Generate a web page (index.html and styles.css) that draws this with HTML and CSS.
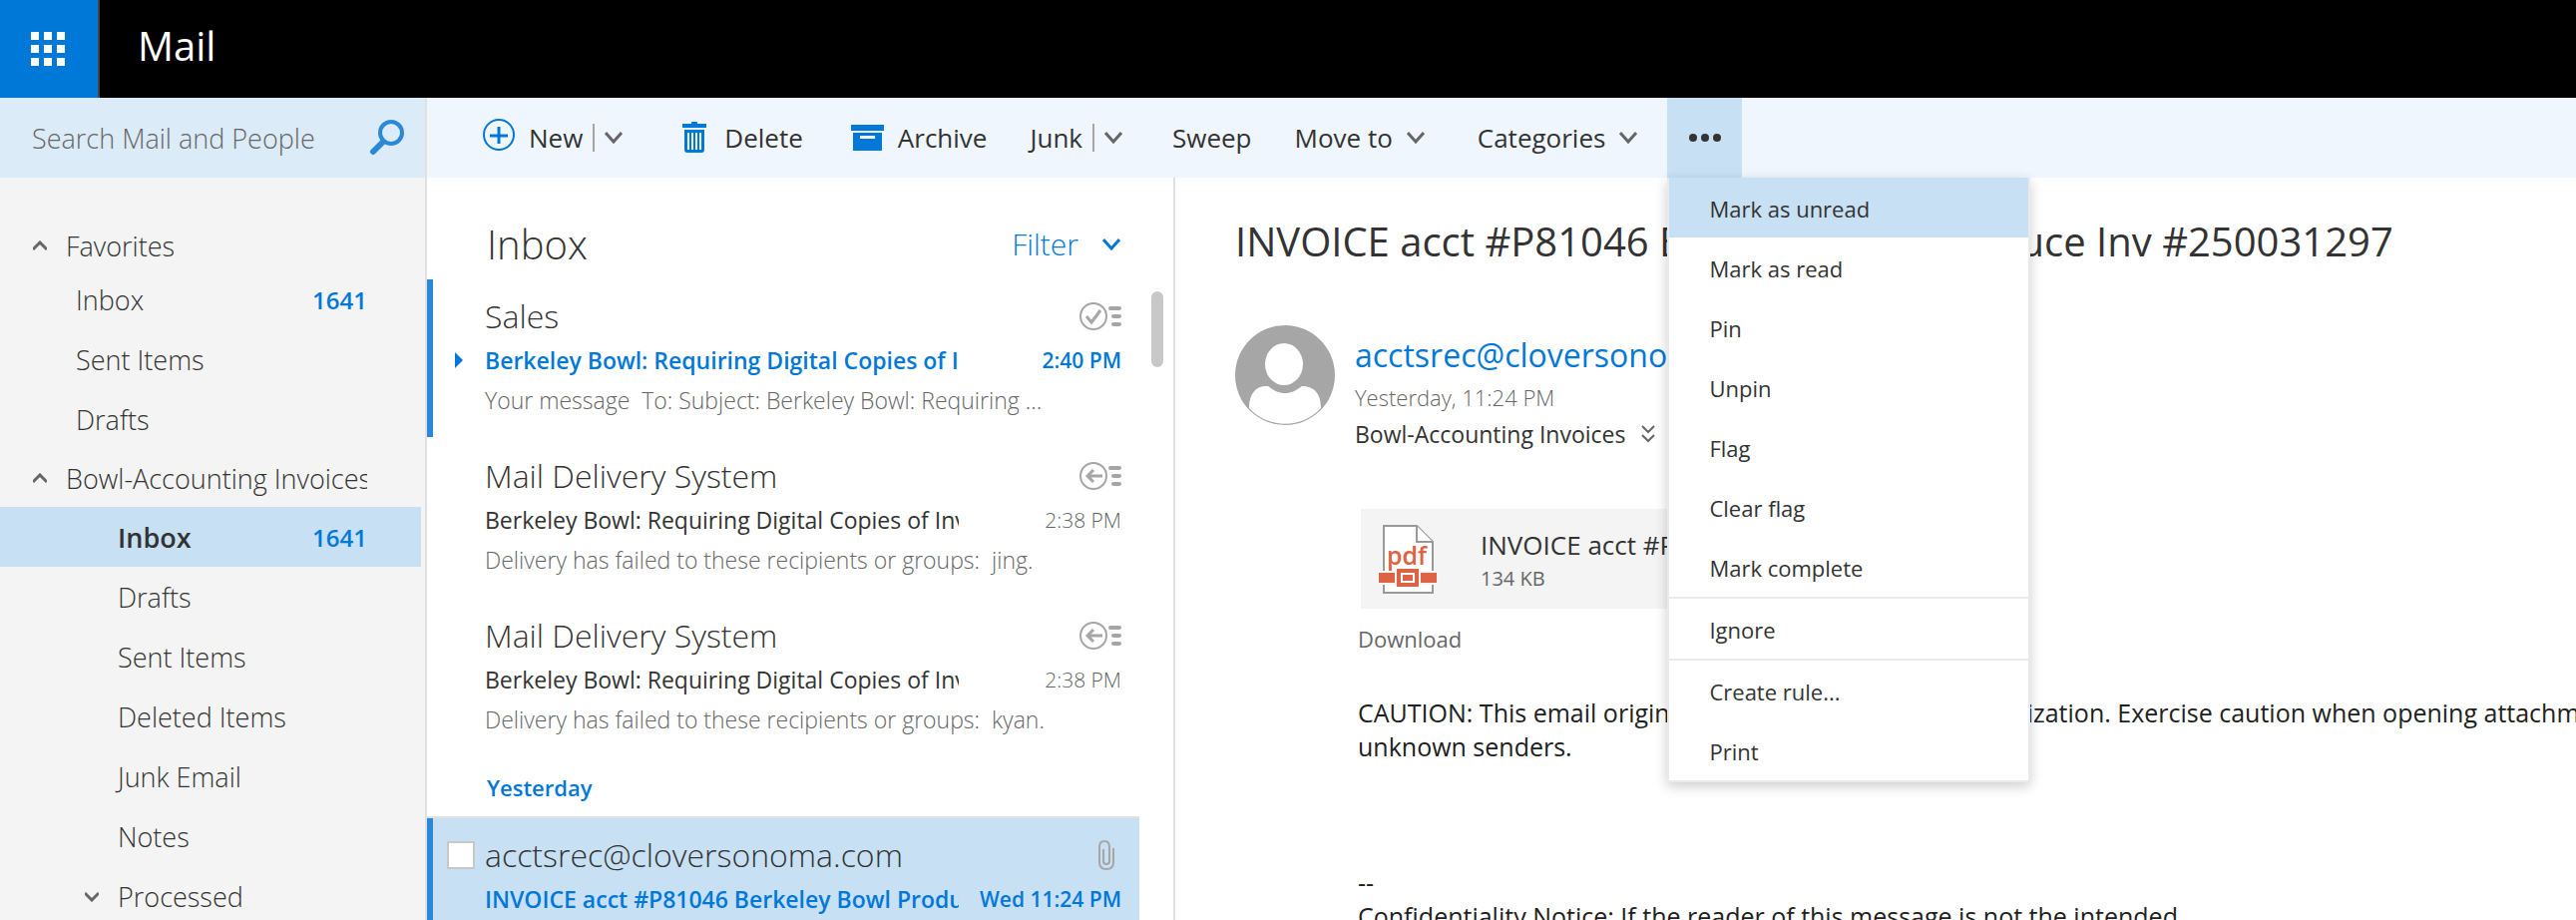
FILE: index.html
```html
<!DOCTYPE html>
<html lang="en">
<head>
    <meta charset="UTF-8">
    <meta name="viewport" content="width=device-width, initial-scale=1.0">
    <title>Mail</title>
    <link rel="stylesheet" href="styles.css">
</head>
<body>
    <header class="topbar">
        <button class="launcher" aria-label="App launcher">
            <svg width="34" height="34" viewBox="0 0 34 34" fill="#fff">
                <path d="M0 0h8v8H0zM13 0h8v8h-8zM26 0h8v8h-8zM0 13h8v8H0zM13 13h8v8h-8zM26 13h8v8h-8zM0 26h8v8H0zM13 26h8v8h-8zM26 26h8v8h-8z"/>
            </svg>
        </button>
        <span class="app-name">Mail</span>
    </header>

    <div class="main">
        <aside class="sidebar">
            <form class="search">
                <input type="text" placeholder="Search Mail and People" aria-label="Search Mail and People">
                <button type="button" aria-label="Search">
                    <svg width="36" height="36" viewBox="0 0 36 36" fill="none" stroke="#2b88d8" stroke-linecap="round">
                        <circle cx="22" cy="13" r="11" stroke-width="4"/>
                        <path d="M14 22L4 32" stroke-width="6"/>
                    </svg>
                </button>
            </form>
            <nav class="folders">
                <button class="group-title">
                    <svg class="caret" viewBox="0 0 14 11"><path d="M0 9L7 2L14 9"/></svg>
                    <span>Favorites</span>
                </button>
                <a class="folder" href="#">Inbox<span class="count">1641</span></a>
                <a class="folder" href="#">Sent Items</a>
                <a class="folder" href="#">Drafts</a>
                <button class="group-title account">
                    <svg class="caret" viewBox="0 0 14 11"><path d="M0 9L7 2L14 9"/></svg>
                    <span>Bowl-Accounting Invoices</span>
                </button>
                <a class="folder sub selected" href="#">Inbox<span class="count">1641</span></a>
                <a class="folder sub" href="#">Drafts</a>
                <a class="folder sub" href="#">Sent Items</a>
                <a class="folder sub" href="#">Deleted Items</a>
                <a class="folder sub" href="#">Junk Email</a>
                <a class="folder sub" href="#">Notes</a>
                <a class="folder nested" href="#">
                    <svg class="caret" viewBox="0 0 14 11"><path d="M0 2L7 9L14 2"/></svg>
                    Processed
                </a>
            </nav>
        </aside>

        <div class="content">
            <div class="toolbar">
                <div class="tool split new">
                    <button>
                        <svg class="plus" width="32" height="32" viewBox="0 0 32 32" fill="none" stroke="#0078d7">
                            <circle cx="16" cy="16" r="15" stroke-width="2"/>
                            <path d="M16 8v17M7 17h18" stroke-width="3"/>
                        </svg>
                        New
                    </button>
                    <button class="drop" aria-label="More new options">
                        <svg class="chevron" viewBox="0 0 18 14"><path d="M1 2L9 11L17 2"/></svg>
                    </button>
                </div>
                <button class="tool delete">
                    <svg width="24" height="32" viewBox="0 0 24 32">
                        <path fill="#0078d7" d="M9 2V1q0-1 1-1h4q1 0 1 1v1h9v4H0V2zM2 8h20v20q0 3-3 3H5q-3 0-3-3z"/>
                        <path stroke="#eff6fd" stroke-width="2" d="M6 11v17M10 11v17M14 11v17M18 11v17"/>
                    </svg>
                    Delete
                </button>
                <button class="tool archive">
                    <svg width="33" height="26" viewBox="0 0 33 26">
                        <path fill="#0078d7" d="M0 0h33v6H0zM2 8h29v18H2z"/>
                        <path fill="#fff" d="M9 11h15v3H9z"/>
                    </svg>
                    Archive
                </button>
                <div class="tool split junk">
                    <button>Junk</button>
                    <button class="drop" aria-label="Junk options">
                        <svg class="chevron" viewBox="0 0 18 14"><path d="M1 2L9 11L17 2"/></svg>
                    </button>
                </div>
                <button class="tool sweep">Sweep</button>
                <button class="tool move">
                    Move to
                    <svg class="chevron" viewBox="0 0 18 14"><path d="M1 2L9 11L17 2"/></svg>
                </button>
                <button class="tool categories">
                    Categories
                    <svg class="chevron" viewBox="0 0 18 14"><path d="M1 2L9 11L17 2"/></svg>
                </button>
                <div class="more">
                    <button class="more-btn" aria-label="More commands">
                        <svg width="32" height="8" viewBox="0 0 32 8" fill="#333">
                            <circle cx="4" cy="4" r="4"/><circle cx="16" cy="4" r="4"/><circle cx="28" cy="4" r="4"/>
                        </svg>
                    </button>
                    <div class="menu">
                        <button class="active">Mark as unread</button>
                        <button>Mark as read</button>
                        <button>Pin</button>
                        <button>Unpin</button>
                        <button>Flag</button>
                        <button>Clear flag</button>
                        <button>Mark complete</button>
                        <hr>
                        <button>Ignore</button>
                        <hr>
                        <button>Create rule...</button>
                        <button>Print</button>
                    </div>
                </div>
            </div>

            <div class="panes">
                <section class="list">
                    <div class="list-header">
                        <h1>Inbox</h1>
                        <button class="filter">
                            Filter
                            <svg class="chevron" viewBox="0 0 18 14"><path d="M1 2L9 11L17 2"/></svg>
                        </button>
                    </div>
                    <div class="list-body">
                        <div class="messages">
                            <article class="message unread">
                                <div class="mark">
                                    <svg width="8" height="16" viewBox="0 0 8 16" fill="#0078d7"><path d="M0 0L8 8L0 16z"/></svg>
                                </div>
                                <div class="row">
                                    <span class="name">Sales</span>
                                    <svg class="status" viewBox="0 0 42 28">
                                        <circle cx="14" cy="14" r="13"/>
                                        <path d="M7 14L12 20L21 8" stroke-width="3"/>
                                        <path class="lines" d="M31 6h9M34 14h6M34 22h6"/>
                                    </svg>
                                </div>
                                <div class="row">
                                    <span class="subject">Berkeley Bowl: Requiring Digital Copies of Invoices</span>
                                    <time>2:40 PM</time>
                                </div>
                                <p class="preview">Your message&nbsp; To: Subject: Berkeley Bowl: Requiring ...</p>
                            </article>
                            <article class="message">
                                <div class="row">
                                    <span class="name">Mail Delivery System</span>
                                    <svg class="status" viewBox="0 0 42 28">
                                        <circle cx="14" cy="14" r="13"/>
                                        <path d="M23 14H8M14 8L8 14L14 20" stroke-width="3"/>
                                        <path class="lines" d="M31 6h9M34 14h6M34 22h6"/>
                                    </svg>
                                </div>
                                <div class="row">
                                    <span class="subject">Berkeley Bowl: Requiring Digital Copies of Invoices</span>
                                    <time>2:38 PM</time>
                                </div>
                                <p class="preview">Delivery has failed to these recipients or groups:&nbsp; jing.</p>
                            </article>
                            <article class="message">
                                <div class="row">
                                    <span class="name">Mail Delivery System</span>
                                    <svg class="status" viewBox="0 0 42 28">
                                        <circle cx="14" cy="14" r="13"/>
                                        <path d="M23 14H8M14 8L8 14L14 20" stroke-width="3"/>
                                        <path class="lines" d="M31 6h9M34 14h6M34 22h6"/>
                                    </svg>
                                </div>
                                <div class="row">
                                    <span class="subject">Berkeley Bowl: Requiring Digital Copies of Invoices</span>
                                    <time>2:38 PM</time>
                                </div>
                                <p class="preview">Delivery has failed to these recipients or groups:&nbsp; kyan.</p>
                            </article>
                            <h2 class="day">Yesterday</h2>
                            <article class="message unread current">
                                <input type="checkbox" class="pick" aria-label="Select message">
                                <div class="row">
                                    <span class="name">acctsrec@cloversonoma.com</span>
                                    <svg class="clip" width="16" height="30" viewBox="0 0 16 30" fill="none" stroke="#a6a6a6" stroke-width="2">
                                        <path d="M15 8v14q0 7-7 7t-7-7V7q0-6 5-6t5 6v14q0 3-3 3t-3-3V9"/>
                                    </svg>
                                </div>
                                <div class="row">
                                    <span class="subject">INVOICE acct #P81046 Berkeley Bowl Produce Inv</span>
                                    <time>Wed 11:24 PM</time>
                                </div>
                            </article>
                        </div>
                        <div class="scrollbar"></div>
                    </div>
                </section>

                <section class="reading">
                    <h2 class="title">INVOICE acct #P81046 Berkeley Bowl Produce Inv #250031297</h2>
                    <div class="sender">
                        <svg class="avatar" viewBox="0 0 100 100">
                            <circle cx="50" cy="50" r="50" fill="#a6a6a6"/>
                            <ellipse cx="49" cy="39" rx="19" ry="21" fill="#fff"/>
                            <path fill="#fff" d="M14 83C14 67 22 60 33 61C40 66 44 68 50 68C56 68 60 66 67 61C78 61 86 67 86 83A49 49 0 0 1 14 83z"/>
                        </svg>
                        <div class="sender-info">
                            <a class="from" href="#">acctsrec@cloversonoma.com</a>
                            <p class="date">Yesterday, 11:24 PM</p>
                            <p class="to">
                                Bowl-Accounting Invoices
                                <svg width="14" height="18" viewBox="0 0 14 18" fill="none" stroke="#666" stroke-width="2">
                                    <path d="M1 1L7 7L13 1M1 10L7 16L13 10"/>
                                </svg>
                            </p>
                        </div>
                    </div>
                    <div class="mail-body">
                        <a class="attachment" href="#">
                            <svg width="58" height="70" viewBox="0 0 58 70">
                                <path d="M5 1H38L54 17V68H5z" fill="#fff" stroke="#999" stroke-width="2"/>
                                <path d="M38 1V17H54" fill="#fff" stroke="#999" stroke-width="2"/>
                                <path d="M0 46h58v14H0z" fill="#f4f4f4"/>
                                <text x="28" y="40" text-anchor="middle" class="pdf-text">pdf</text>
                                <path d="M0 48h16v10H0zM42 48h16v10H42zM18 44h22v18H18z" fill="#dc6344"/>
                                <path d="M23 49h12v8H23z" fill="#dc6344" stroke="#fff" stroke-width="2"/>
                            </svg>
                            <span class="file">
                                <span class="file-name">INVOICE acct #P81046.pdf</span>
                                <span class="file-size">134 KB</span>
                            </span>
                        </a>
                        <a class="download" href="#">Download</a>
                        <p class="text">CAUTION: This email originated from outside of the organization. Exercise caution when opening attachments or links from
unknown senders.



--
Confidentiality Notice: If the reader of this message is not the intended</p>
                    </div>
                </section>
            </div>
        </div>
    </div>
</body>
</html>
```
FILE: styles.css
```css
* {
    margin: 0;
    padding: 0;
    box-sizing: border-box;
}
body {
    height: 100vh;
    display: flex;
    flex-direction: column;
    overflow: hidden;
    background: #fff;
    color: #333;
    font-family: "Open Sans", "Noto Sans", sans-serif;
    font-size: 22px;
}
button, input {
    font: inherit;
    color: inherit;
    background: none;
    border: none;
    cursor: pointer;
}
a {
    color: inherit;
    text-decoration: none;
}
svg {
    flex: none;
}

/* Top bar */
.topbar {
    display: flex;
    align-items: center;
    height: 98px;
    flex: none;
    background: #000;
    color: #fff;
}
.launcher {
    display: flex;
    align-items: center;
    justify-content: center;
    width: 100px;
    height: 98px;
    padding-right: 2px;
    background: #0078d7;
    border-right: 2px solid #444;
}
.app-name {
    margin-left: 38px;
    padding-bottom: 8px;
    font-size: 40px;
}
.main {
    display: flex;
    flex: 1;
    min-height: 0;
}

/* Folder pane */
.sidebar {
    flex: none;
    width: 428px;
    background: #f4f4f4;
    border-right: 2px solid #e1e1e1;
    font-size: 27px;
    font-weight: 300;
    overflow: hidden;
}
.search {
    display: flex;
    align-items: center;
    height: 80px;
    padding: 0 20px 0 32px;
    background: #dcebf8;
}
.search input {
    flex: 1;
    min-width: 0;
    font-size: 27px;
    outline: none;
}
.search input::placeholder {
    color: #666;
    opacity: 1;
}
.search button {
    display: flex;
}
.folders {
    padding-top: 44px;
}
.group-title {
    display: flex;
    align-items: center;
    gap: 19px;
    width: 368px;
    height: 48px;
    padding-left: 33px;
    font-weight: 300;
    text-align: left;
    white-space: nowrap;
}
.group-title span {
    overflow: hidden;
}
.account {
    height: 58px;
}
.caret {
    width: 14px;
    height: 11px;
    fill: none;
    stroke: #666;
    stroke-width: 3;
}
.folder {
    display: flex;
    align-items: center;
    height: 60px;
    margin-right: 4px;
    padding: 0 54px 0 76px;
}
.sub {
    padding-left: 118px;
}
.nested {
    padding-left: 85px;
    gap: 19px;
}
.selected {
    background: #c7e0f4;
    font-weight: 600;
}
.count {
    margin-left: auto;
    color: #0078d7;
    font-size: 24px;
    font-weight: 600;
}

/* Toolbar */
.content {
    display: flex;
    flex-direction: column;
    flex: 1;
    min-width: 0;
}
.toolbar {
    display: flex;
    align-items: center;
    flex: none;
    height: 80px;
    padding-left: 56px;
    background: #eff6fd;
    font-size: 26px;
}
.tool, .split button {
    display: flex;
    align-items: center;
    gap: 14px;
    white-space: nowrap;
}
.tool.split {
    gap: 10px;
}
.split .drop {
    height: 28px;
    padding-left: 10px;
    border-left: 2px solid #a6a6a6;
}
.plus {
    margin-bottom: 6px;
}
.chevron {
    width: 18px;
    height: 14px;
    fill: none;
    stroke: #666;
    stroke-width: 3;
}
.new {
    margin-right: 60px;
}
.tool.delete {
    gap: 18px;
    margin-right: 48px;
}
.archive, .sweep {
    margin-right: 43px;
}
.junk {
    margin-right: 50px;
}
.move {
    margin-right: 53px;
}
.categories {
    margin-right: 30px;
}
.more {
    position: relative;
}
.more-btn {
    display: flex;
    align-items: center;
    justify-content: center;
    width: 75px;
    height: 80px;
    background: #c7e0f4;
}
.menu {
    position: absolute;
    top: 80px;
    left: 0;
    z-index: 10;
    width: 364px;
    background: #fff;
    border: 2px solid #eaeaea;
    border-top: none;
    box-shadow: 0 4px 12px rgba(0, 0, 0, 0.2);
    font-size: 22px;
}
.menu button {
    display: block;
    width: 100%;
    height: 60px;
    padding: 2px 40px 0;
    text-align: left;
}
.menu button.active {
    background: #c7e0f4;
}
.menu hr {
    border: none;
    border-top: 2px solid #eaeaea;
}

/* Message list */
.panes {
    display: flex;
    flex: 1;
    min-height: 0;
}
.list {
    flex: none;
    width: 750px;
    border-right: 2px solid #e1e1e1;
    overflow: hidden;
}
.list-header {
    display: flex;
    align-items: center;
    justify-content: space-between;
    height: 102px;
    padding: 31px 53px 0 60px;
}
.list-header h1 {
    font-size: 40px;
    font-weight: 300;
}
.filter {
    display: flex;
    align-items: center;
    gap: 24px;
    color: #0078d7;
    font-size: 30px;
    font-weight: 300;
}
.filter .chevron {
    stroke: #0078d7;
}
.list-body {
    display: flex;
    justify-content: space-between;
}
.messages {
    flex: none;
    width: 714px;
}
.message {
    position: relative;
    height: 158px;
    margin-bottom: 2px;
    padding: 13px 18px 0 52px;
    border-left: 6px solid transparent;
}
.message.unread {
    border-left-color: #2b88d8;
}
.row {
    display: flex;
    align-items: center;
    justify-content: space-between;
    line-height: 40px;
}
.name {
    font-size: 32px;
    font-weight: 300;
    line-height: 48px;
}
.subject {
    width: 475px;
    overflow: hidden;
    font-size: 23px;
    white-space: nowrap;
}
.row time {
    color: #666;
    font-size: 21px;
    font-weight: 300;
}
.unread .subject, .unread time {
    color: #0078d7;
    font-weight: 600;
}
.preview {
    color: #666;
    font-size: 23px;
    font-weight: 300;
    line-height: 40px;
    white-space: nowrap;
}
.status {
    width: 42px;
    height: 28px;
    fill: none;
    stroke: #a6a6a6;
    stroke-width: 2;
}
.lines {
    stroke-width: 4;
    stroke-linecap: round;
}
.mark {
    position: absolute;
    top: 73px;
    left: 22px;
    line-height: 0;
}
.day {
    height: 58px;
    padding-left: 60px;
    color: #0078d7;
    font-size: 22px;
    font-weight: 600;
    line-height: 58px;
}
.current {
    margin-top: 2px;
    background: #c7e0f4;
    box-shadow: 0 -2px 0 #e1e1e1;
}
.clip {
    margin-right: 7px;
}
.pick {
    position: absolute;
    top: 23px;
    left: 14px;
    width: 28px;
    height: 28px;
    appearance: none;
    background: #fff;
    border: 2px solid #c8c8c8;
}
.scrollbar {
    width: 12px;
    height: 76px;
    margin: 12px 10px 0 0;
    background: #c8c8c8;
    border-radius: 6px;
}

/* Reading pane */
.reading {
    flex: 1;
    min-width: 0;
    padding: 36px 0 0 60px;
    overflow: hidden;
}
.title {
    font-size: 40px;
    font-weight: 400;
    line-height: 56px;
    white-space: nowrap;
}
.sender {
    display: flex;
    gap: 20px;
    margin-top: 56px;
}
.avatar {
    width: 100px;
    height: 100px;
}
.sender-info {
    padding-top: 6px;
}
.from {
    display: block;
    color: #0078d7;
    font-size: 32px;
    line-height: 48px;
}
.date {
    color: #666;
    font-size: 22px;
    font-weight: 300;
    line-height: 36px;
}
.to {
    display: flex;
    align-items: center;
    gap: 16px;
    font-size: 23px;
    line-height: 38px;
}
.mail-body {
    margin: 56px 0 0 123px;
}
.attachment {
    display: flex;
    gap: 44px;
    width: 560px;
    height: 100px;
    margin-left: 3px;
    padding: 16px 18px;
    background: #f4f4f4;
}
.pdf-text {
    fill: #dc6344;
    font-size: 25px;
    font-weight: 600;
}
.file {
    display: flex;
    flex-direction: column;
    padding-top: 2px;
}
.file-name {
    font-size: 26px;
    line-height: 36px;
}
.file-size {
    color: #666;
    font-size: 20px;
    line-height: 32px;
}
.download {
    display: block;
    color: #666;
    line-height: 60px;
}
.text {
    margin-top: 27px;
    color: #212121;
    font-size: 25px;
    line-height: 34px;
    white-space: pre;
}
```
